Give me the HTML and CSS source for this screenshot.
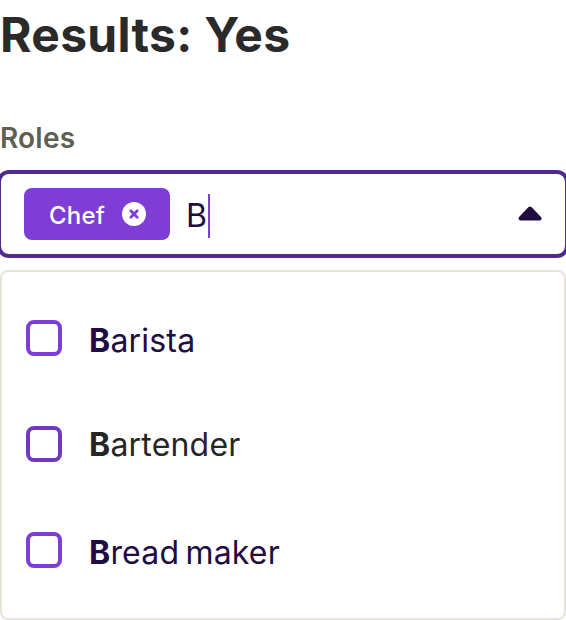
FILE: index.html
```html
<!DOCTYPE html>
<html lang="en">
<head>
    <meta charset="UTF-8">
    <meta name="viewport" content="width=device-width, initial-scale=1.0">
    <title>Results</title>
    <link rel="stylesheet" href="styles.css">
</head>
<body>
    <h1 class="result">Results: Yes</h1>

    <label class="fieldLabel">Roles</label>

    <!-- select box -->
    <div class="selectBox">
        <span class="chip">
            <span class="chipLabel">Chef</span>
            <svg class="chipClose" viewBox="0 0 24 24" width="24" height="24">
                <circle cx="12" cy="12" r="12" fill="#fff"/>
                <path d="M8.8 8.8l6.4 6.4M15.2 8.8l-6.4 6.4" stroke="#7e3dd4" stroke-width="2.8" stroke-linecap="round"/>
            </svg>
        </span>
        <span class="typed">B</span>
        <span class="cursor"></span>
        <svg class="caret" viewBox="0 0 24 16" width="24" height="16">
            <path d="M12 2.5L21.5 12.5H2.5Z" fill="#200c42" stroke="#200c42" stroke-width="4" stroke-linejoin="round"/>
        </svg>
    </div>

    <!-- options -->
    <ul class="optionList">
        <li class="option">
            <span class="checkbox"></span>
            <span class="optionText"><b>B</b>arista</span>
        </li>
        <li class="option hovered">
            <span class="checkbox"></span>
            <span class="optionText"><b>B</b>artender</span>
        </li>
        <li class="option">
            <span class="checkbox"></span>
            <span class="optionText"><b>B</b>read maker</span>
        </li>
    </ul>
</body>
</html>
```

FILE: styles.css
```css
body {
    margin: 0;
    overflow: hidden;
    font-family: Inter, "Liberation Sans", sans-serif;
    background-color: #fff;
    color: #262626;
}

.result {
    margin: 0;
    padding-top: 7px;
    font-size: 48px;
    line-height: 56px;
    font-weight: 700;
    letter-spacing: 0.3px;
    color: #2a2a2a;
}

.fieldLabel {
    display: block;
    margin-top: 60px;
    font-size: 28px;
    line-height: 30px;
    font-weight: 600;
    letter-spacing: 0.2px;
    color: #5f5f52;
}

/* runs a little past both window edges */
.selectBox {
    display: flex;
    align-items: center;
    box-sizing: border-box;
    height: 88px;
    margin: 17px -3px 0;
    padding: 0 23px;
    border: 4px solid #4f2a8f;
    border-radius: 12px;
    background-color: #fff;
}

.chip {
    display: flex;
    align-items: center;
    justify-content: space-between;
    box-sizing: border-box;
    width: 146px;
    height: 52px;
    padding: 0 24px 0 25px;
    border-radius: 8px;
    background-color: #7e3dd4;
    color: #fff;
    font-size: 24px;
    font-weight: 500;
    letter-spacing: 0.2px;
}

.chipLabel {
    padding-top: 2px;
}

.chipClose {
    flex-shrink: 0;
}

.typed {
    margin: 4px 0 0 16px;
    font-size: 32px;
    line-height: 44px;
    letter-spacing: 0.6px;
    color: #200c42;
}

.cursor {
    width: 2px;
    height: 44px;
    margin-top: 4px;
    background-color: #7e3dd4;
}

.caret {
    margin-left: auto;
}

.optionList {
    list-style: none;
    box-sizing: border-box;
    height: 350px;
    margin: 12px 0 0;
    padding: 13px 0 0 24px;
    border: 2px solid #e6e4d8;
    border-radius: 8px;
}

.option {
    display: flex;
    align-items: center;
    gap: 27px;
    height: 106px;
    color: #200c42;
    font-size: 32px;
}

.option b {
    font-weight: 700;
}

.option.hovered {
    color: #262626;
}

.option.hovered .checkbox {
    border-color: #7438c0;
}

.option.hovered .optionText {
    padding-top: 0;
}

.checkbox {
    box-sizing: border-box;
    flex-shrink: 0;
    width: 36px;
    height: 36px;
    border: 4px solid #7e3dd4;
    border-radius: 8px;
}

.optionText {
    padding-top: 4px;
    letter-spacing: 0.2px;
    word-spacing: -3px;
}
```
